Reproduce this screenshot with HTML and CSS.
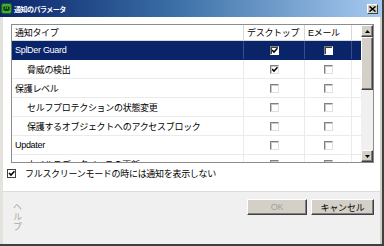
FILE: index.html
```html
<!DOCTYPE html>
<html lang="ja">
<head>
<meta charset="utf-8">
<title>通知のパラメータ</title>
<link rel="stylesheet" href="styles.css">
</head>
<body>
<div class="window">
  <div class="titlebar">
    <svg class="appicon" width="11" height="11" viewBox="0 0 11 11">
      <rect x="0.5" y="0.5" width="10" height="10" rx="2" fill="#3fae3a" stroke="#1d5e1a"/>
      <path d="M3 3.5 L8 3.5 L8.5 5.5 L7.5 8 L3.5 8 L2.5 5.5 Z" fill="#103f10"/>
      <rect x="4" y="4.5" width="1" height="1" fill="#9fe09a"/>
      <rect x="6" y="4.5" width="1" height="1" fill="#9fe09a"/>
      <path d="M1.5 4 L3 5 M9.5 4 L8 5 M1.5 7 L3 6.5 M9.5 7 L8 6.5" stroke="#103f10" stroke-width="0.8"/>
    </svg>
    <span class="title">通知のパラメータ</span>
    <span class="closebtn">
      <svg width="7" height="6" viewBox="0 0 7 6"><path d="M0.5 0.5 L6.5 5.5 M6.5 0.5 L0.5 5.5" stroke="#000" stroke-width="1.5"/></svg>
    </span>
  </div>
  <div class="body">
    <div class="main">
      <div class="list">
        <div class="table">
          <div class="row head">
            <div class="c name">通知タイプ</div>
            <div class="c desk">デスクトップ</div>
            <div class="c mail">Eメール</div>
            <div class="c fill"></div>
          </div>
          <div class="row sel">
            <div class="c name">SplDer Guard</div>
            <div class="c desk ctr"><span class="cb on"></span></div>
            <div class="c mail ctr"><span class="cb"></span></div>
            <div class="c fill"></div>
          </div>
          <div class="row">
            <div class="c name sub">脅威の検出</div>
            <div class="c desk ctr"><span class="cb on"></span></div>
            <div class="c mail ctr"><span class="cb"></span></div>
            <div class="c fill"></div>
          </div>
          <div class="row">
            <div class="c name">保護レベル</div>
            <div class="c desk ctr"><span class="cb"></span></div>
            <div class="c mail ctr"><span class="cb"></span></div>
            <div class="c fill"></div>
          </div>
          <div class="row">
            <div class="c name sub">セルフプロテクションの状態変更</div>
            <div class="c desk ctr"><span class="cb"></span></div>
            <div class="c mail ctr"><span class="cb"></span></div>
            <div class="c fill"></div>
          </div>
          <div class="row">
            <div class="c name sub">保護するオブジェクトへのアクセスブロック</div>
            <div class="c desk ctr"><span class="cb"></span></div>
            <div class="c mail ctr"><span class="cb"></span></div>
            <div class="c fill"></div>
          </div>
          <div class="row">
            <div class="c name">Updater</div>
            <div class="c desk ctr"><span class="cb"></span></div>
            <div class="c mail ctr"><span class="cb"></span></div>
            <div class="c fill"></div>
          </div>
          <div class="row">
            <div class="c name sub">ウイルスデータベースの更新</div>
            <div class="c desk ctr"><span class="cb"></span></div>
            <div class="c mail ctr"><span class="cb"></span></div>
            <div class="c fill"></div>
          </div>
        </div>
        <div class="scrollbar">
          <div class="sbtn"><svg width="5" height="3" viewBox="0 0 5 3"><path d="M2.5 0 L5 3 L0 3 Z" fill="#000"/></svg></div>
          <div class="thumb"></div>
          <div class="track"></div>
          <div class="sbtn"><svg width="5" height="3" viewBox="0 0 5 3"><path d="M0 0 L5 0 L2.5 3 Z" fill="#000"/></svg></div>
        </div>
      </div>
      <label class="opt"><span class="cb on flat"></span><span class="opttext">フルスクリーンモードの時には通知を表示しない</span></label>
    </div>
    <div class="footer">
      <div class="help">ヘルプ</div>
      <div class="buttons">
        <button class="btn off">OK</button>
        <button class="btn">キャンセル</button>
      </div>
    </div>
  </div>
</div>
</body>
</html>
```
FILE: styles.css
```css
* { box-sizing: border-box; }
html, body {
  margin: 0;
  padding: 0;
  width: 384px;
  height: 246px;
  overflow: hidden;
  background: #404040;
}
body {
  font-family: "Liberation Sans", "Noto Sans CJK JP", sans-serif;
  font-size: 9px;
  color: #000;
}
.window {
  width: 384px;
  height: 246px;
  display: flex;
  flex-direction: column;
  border-right: 2px solid #404040;
  border-bottom: 2px solid #404040;
  background: #d4d0c8;
}
.titlebar {
  height: 17px;
  flex: none;
  display: flex;
  align-items: center;
  padding-left: 1px;
  padding-right: 4px;
  background: linear-gradient(to right, #0a246a 0%, #3a6ea5 45%, #a6caf0 100%);
}
.appicon { flex: none; margin-right: 2px; margin-top: -1px; }
.title {
  color: #fff;
  font-weight: bold;
  font-size: 7px;
  letter-spacing: -0.5px;
  font-family: "Noto Sans CJK JP", sans-serif;
}
.closebtn {
  margin-left: auto;
  width: 11px;
  height: 10px;
  display: flex;
  align-items: center;
  justify-content: center;
  background: #d4d0c8;
  border-top: 1px solid #fff;
  border-left: 1px solid #fff;
  border-right: 1px solid #404040;
  border-bottom: 1px solid #404040;
}
.body {
  flex: 1;
  display: flex;
  flex-direction: column;
  border-left: 3px solid #e4e2dc;
  border-right: 2px solid #d4d0c8;
}
.main {
  height: 174px;
  flex: none;
  background: #fff;
  padding: 7px 6px 0 8px;
}
.list {
  height: 139px;
  display: flex;
  border: 1px solid #8c8c8c;
  background: #fff;
}
.table {
  width: 349px;
  height: 137px;
  overflow: hidden;
}
.row {
  display: flex;
  height: 19px;
  border-bottom: 1px solid #ebebeb;
}
.row.head { height: 16px; border-bottom: 1px solid #d8d8d8; }
.c {
  display: flex;
  align-items: center;
  padding-left: 3px;
  border-right: 1px solid #ebebeb;
  white-space: nowrap;
  overflow: hidden;
  letter-spacing: -0.3px;
}
.c.name { width: 232px; }
.c.desk { width: 61px; }
.c.mail { width: 47px; }
.c.fill { flex: 1; border-right: none; }
.c.sub { padding-left: 15px; }
.c.ctr { justify-content: center; padding-left: 0; }
.head .c { border-right-color: #d8d8d8; }
.row.sel { background: #0a246a; color: #fff; border-bottom-color: #0a246a; }
.row.sel .c { border-right-color: #3a4c88; }
.cb {
  display: block;
  width: 9px;
  height: 9px;
  background: #fff;
  border-top: 1px solid #808080;
  border-left: 1px solid #808080;
  border-right: 1px solid #e0e0e0;
  border-bottom: 1px solid #e0e0e0;
  box-shadow: inset 1px 1px 0 #c8c8c8;
}
.cb.on {
  background: #fff url("data:image/svg+xml;utf8,<svg xmlns='http://www.w3.org/2000/svg' width='7' height='7' viewBox='0 0 7 7'><path d='M1 3 L3 5 L6.5 1.2' fill='none' stroke='black' stroke-width='1.6'/></svg>") center / 7px 7px no-repeat;
}
.sel .cb { border-color: #808080 #fff #fff #808080; box-shadow: inset 1px 1px 0 #404040; }
.scrollbar {
  width: 12px;
  display: flex;
  flex-direction: column;
  background: #f0f0f0;
}
.sbtn {
  height: 12px;
  flex: none;
  display: flex;
  align-items: center;
  justify-content: center;
  background: #d4d0c8;
  border-top: 1px solid #fff;
  border-left: 1px solid #fff;
  border-right: 1px solid #404040;
  border-bottom: 1px solid #404040;
  box-shadow: inset -1px -1px 0 #808080;
}
.thumb {
  height: 53px;
  flex: none;
  background: #d4d0c8;
  border-top: 1px solid #fff;
  border-left: 1px solid #fff;
  border-right: 1px solid #404040;
  border-bottom: 1px solid #404040;
  box-shadow: inset -1px -1px 0 #808080;
}
.track { flex: 1; background: #f0f0f0; }
.opt {
  display: flex;
  align-items: center;
  margin-top: 4px;
  margin-left: -4px;
  height: 12px;
}
.cb.flat {
  border: 1px solid #404040;
  box-shadow: none;
  margin-right: 9px;
}
.opttext { letter-spacing: -0.3px; }
.footer {
  flex: 1;
  display: flex;
  justify-content: space-between;
  align-items: flex-start;
  background: #f0f0f0;
  border-top: 1px solid #dcdcdc;
  padding: 7px 6px 0 8px;
}
.help {
  writing-mode: vertical-rl;
  text-orientation: upright;
  color: #a8a8a8;
  font-family: "Noto Sans CJK JP", sans-serif;
  font-size: 9px;
  letter-spacing: 1px;
  margin-top: 3px;
}
.buttons { display: flex; gap: 4px; }
.btn {
  font-family: "Liberation Sans", "Noto Sans CJK JP", sans-serif;
  font-size: 9px;
  height: 16px;
  padding: 0;
  background: #d4d0c8;
  color: #000;
  border-top: 1px solid #fff;
  border-left: 1px solid #fff;
  border-right: 1px solid #404040;
  border-bottom: 1px solid #404040;
  box-shadow: inset -1px -1px 0 #808080;
  width: 63px;
  letter-spacing: -0.2px;
}
.btn.off { width: 60px; color: #a0a0a0; }
```
